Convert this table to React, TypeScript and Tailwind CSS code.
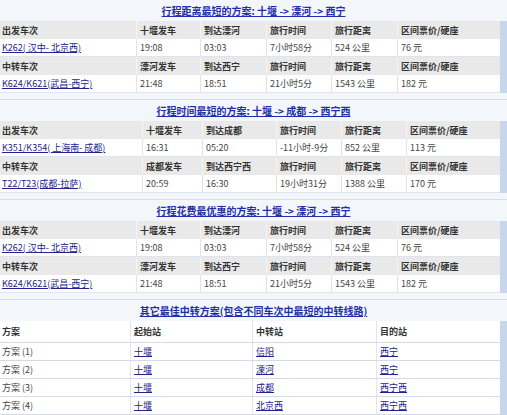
import React from "react";

type Cell = { text: string; link?: boolean };
type Leg = { label: string; heads: string[]; cells: Cell[] };
type Plan = { title: string[]; cols: string; legs: Leg[] };

const plans: Plan[] = [
    {
        title: ["行程距离最短的方案: ", "十堰", " -> ", "溧河", " -> ", "西宁"],
        cols: "grid-cols-[136px_64px_66px_65px_66px_103px]",
        legs: [
            {
                label: "出发车次",
                heads: ["十堰发车", "到达溧河"],
                cells: [{ text: "K262( 汉中- 北京西)", link: true }, { text: "19:08" }, { text: "03:03" }, { text: "7小时58分" }, { text: "524 公里" }, { text: "76 元" }],
            },
            {
                label: "中转车次",
                heads: ["溧河发车", "到达西宁"],
                cells: [{ text: "K624/K621(武昌-西宁)", link: true }, { text: "21:48" }, { text: "18:51" }, { text: "21小时5分" }, { text: "1543 公里" }, { text: "182 元" }],
            },
        ],
    },
    {
        title: ["行程时间最短的方案: ", "十堰", " -> ", "成都", " -> ", "西宁西"],
        cols: "grid-cols-[142px_60px_74px_65px_65px_94px]",
        legs: [
            {
                label: "出发车次",
                heads: ["十堰发车", "到达成都"],
                cells: [{ text: "K351/K354( 上海南- 成都)", link: true }, { text: "16:31" }, { text: "05:20" }, { text: "-11小时-9分" }, { text: "852 公里" }, { text: "113 元" }],
            },
            {
                label: "中转车次",
                heads: ["成都发车", "到达西宁西"],
                cells: [{ text: "T22/T23(成都-拉萨)", link: true }, { text: "20:59" }, { text: "16:30" }, { text: "19小时31分" }, { text: "1388 公里" }, { text: "170 元" }],
            },
        ],
    },
    {
        title: ["行程花费最优惠的方案: ", "十堰", " -> ", "溧河", " -> ", "西宁"],
        cols: "grid-cols-[136px_64px_66px_65px_66px_103px]",
        legs: [
            {
                label: "出发车次",
                heads: ["十堰发车", "到达溧河"],
                cells: [{ text: "K262( 汉中- 北京西)", link: true }, { text: "19:08" }, { text: "03:03" }, { text: "7小时58分" }, { text: "524 公里" }, { text: "76 元" }],
            },
            {
                label: "中转车次",
                heads: ["溧河发车", "到达西宁"],
                cells: [{ text: "K624/K621(武昌-西宁)", link: true }, { text: "21:48" }, { text: "18:51" }, { text: "21小时5分" }, { text: "1543 公里" }, { text: "182 元" }],
            },
        ],
    },
];

const others = [
    ["方案 (1)", "十堰", "信阳", "西宁"],
    ["方案 (2)", "十堰", "溧河", "西宁"],
    ["方案 (3)", "十堰", "成都", "西宁西"],
    ["方案 (4)", "十堰", "北京西", "西宁西"],
];

function Title({ parts }: { parts: string[] }) {
    return (
        <div className="h-[21px] flex items-center justify-center">
            <span className="text-[10px] font-bold text-[#1f2fa8] underline">{parts.join("")}</span>
        </div>
    );
}

function PlanTable({ plan, first }: { plan: Plan; first?: boolean }) {
    return (
        <div className={first ? "mb-[6px]" : "border-t border-[#d6dee9] mb-[6px]"}>
            <Title parts={plan.title} />
            <div className="flex">
                <div className="w-[500px]">
                    {plan.legs.map((leg) => (
                        <div key={leg.label}>
                            <div className={`grid ${plan.cols} h-[18px] bg-[#e9e9e9] font-bold text-[#333]`}>
                                {[leg.label, ...leg.heads, "旅行时间", "旅行距离", "区间票价/硬座"].map((h, i) => (
                                    <div key={i} className={`flex items-center ${i === 0 ? "pl-[2px]" : "pl-[3px] border-l border-[#f5f5f5]"}`}>{h}</div>
                                ))}
                            </div>
                            <div className={`grid ${plan.cols} h-[18px] bg-white border-b border-[#dfe5ee] text-[#444]`}>
                                {leg.cells.map((c, i) => (
                                    <div key={i} className={`flex items-center ${i === 0 ? "pl-[2px]" : "pl-[3px] border-l border-[#e2e2e2]"}`}>
                                        {c.link ? <span className="text-[#22228a] underline">{c.text}</span> : c.text}
                                    </div>
                                ))}
                            </div>
                        </div>
                    ))}
                </div>
                <div className="w-[7px] bg-[#c7d6ea]" />
            </div>
        </div>
    );
}

export default function App() {
    return (
        <div className="w-[507px] h-[415px] overflow-hidden bg-[#f3f6fa] text-[9px] leading-none" style={{ fontFamily: '"Noto Sans CJK SC", "Noto Sans", sans-serif' }}>
            {plans.map((p, i) => (
                <PlanTable key={i} plan={p} first={i === 0} />
            ))}
            <div className="border-t border-[#d6dee9]">
                <div className="h-[21px] flex items-center justify-center">
                    <span className="text-[10px] font-bold text-[#1f2fa8] underline">其它最佳中转方案(包含不同车次中最短的中转线路)</span>
                </div>
                <div className="flex">
                    <div className="w-[500px] bg-white">
                        <div className="grid grid-cols-[130px_122px_124px_124px] h-[22px] font-bold text-[#333] border-b border-[#d3dbe6]">
                            {["方案", "起始站", "中转站", "目的站"].map((h, i) => (
                                <div key={h} className={`flex items-center ${i === 0 ? "pl-[2px]" : "pl-[3px] border-l border-[#e2e6ec]"}`}>{h}</div>
                            ))}
                        </div>
                        {others.map((r) => (
                            <div key={r[0]} className="grid grid-cols-[130px_122px_124px_124px] h-[18px] text-[#444] border-b border-[#d3dbe6]">
                                {r.map((c, i) => (
                                    <div key={i} className={`flex items-center ${i === 0 ? "pl-[2px]" : "pl-[3px] border-l border-[#e2e6ec]"}`}>
                                        {i === 0 ? c : <span className="text-[#22228a] underline">{c}</span>}
                                    </div>
                                ))}
                            </div>
                        ))}
                    </div>
                    <div className="w-[7px] bg-[#c7d6ea]" />
                </div>
            </div>
        </div>
    );
}
